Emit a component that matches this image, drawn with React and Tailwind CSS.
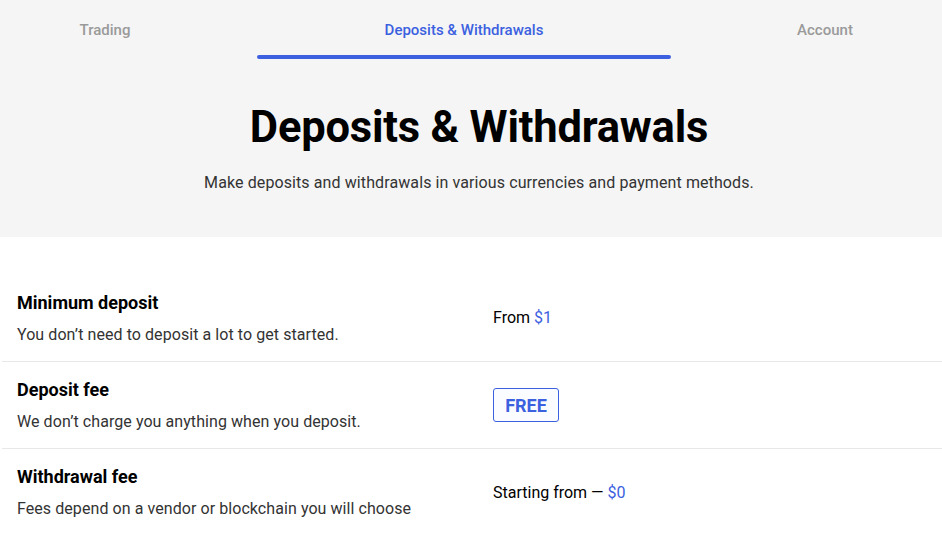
export default function App() {
  const rows = [
    {
      title: "Minimum deposit",
      desc: "You don’t need to deposit a lot to get started.",
      value: (
        <span>
          From <span className="text-[#3c61e0]">$1</span>
        </span>
      ),
    },
    {
      title: "Deposit fee",
      desc: "We don’t charge you anything when you deposit.",
      value: (
        <span className="inline-flex h-[34px] w-[66px] items-center justify-center rounded-[3px] border border-[#3c61e0] bg-[#fbfcff] text-[18px] font-bold text-[#3c61e0]">
          FREE
        </span>
      ),
    },
    {
      title: "Withdrawal fee",
      desc: "Fees depend on a vendor or blockchain you will choose",
      value: (
        <span>
          Starting from — <span className="text-[#3c61e0]">$0</span>
        </span>
      ),
    },
  ];

  return (
    <div
      className="min-h-[537px] w-full bg-white text-black"
      style={{ fontFamily: "Roboto, 'Liberation Sans', sans-serif" }}
    >
      {/* Header */}
      <div className="h-[237px] bg-[#f5f5f5]">
        <nav className="flex h-[60px] text-[15px] font-medium">
          <a className="flex w-[210px] items-center justify-center text-[#9a9a9a]">
            Trading
          </a>
          <a className="relative ml-[47px] flex w-[414px] items-center justify-center text-[#3c61e0]">
            Deposits &amp; Withdrawals
            <span className="absolute bottom-[1px] left-0 h-[4px] w-full rounded-full bg-[#3c61e0]" />
          </a>
          <a className="ml-[37px] flex w-[234px] items-center justify-center text-[#9a9a9a]">
            Account
          </a>
        </nav>
        <div className="flex flex-col items-center pl-[16px] pt-[40px]">
          <h1 className="text-[43.5px] font-bold leading-[56px] tracking-[-0.2px]">
            Deposits &amp; Withdrawals
          </h1>
          <p className="mt-[15px] text-[16px] tracking-[0.1px] text-[#333]">
            Make deposits and withdrawals in various currencies and payment methods.
          </p>
        </div>
      </div>

      {/* Details */}
      <div className="pt-[38px]">
        {rows.map((r, i) => (
          <div
            key={r.title}
            className={`ml-[2px] flex h-[87px] items-center ${
              i < rows.length - 1 ? "border-b border-[#e8e8e8]" : ""
            }`}
          >
            <div className="w-[491px] pl-[15px]">
              <div className="text-[18px] font-bold leading-[22px]">{r.title}</div>
              <div className="mt-[11px] text-[16px] leading-[20px] tracking-[0.07px] text-[#333]">
                {r.desc}
              </div>
            </div>
            <div className="text-[16px]">{r.value}</div>
          </div>
        ))}
      </div>
    </div>
  );
}
